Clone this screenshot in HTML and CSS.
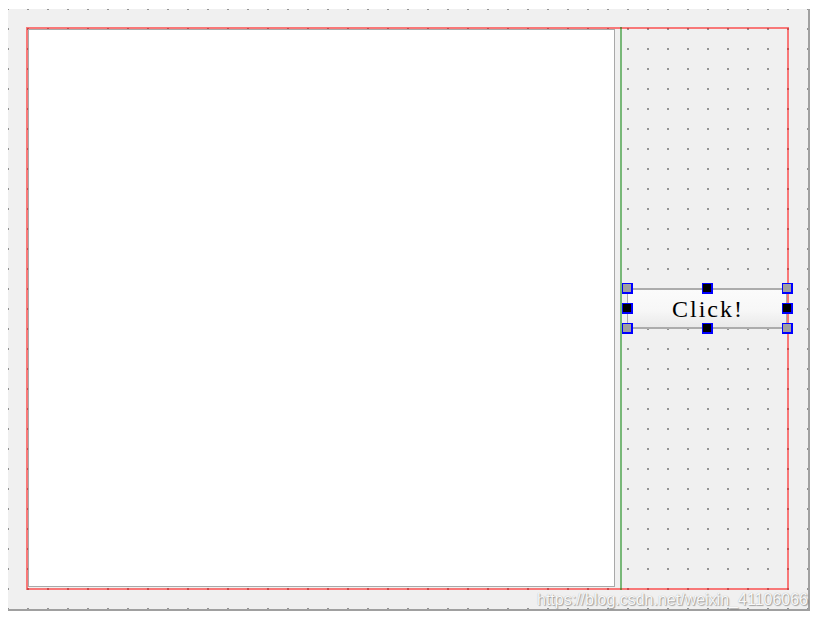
FILE: index.html
```html
<!DOCTYPE html>
<html lang="en">
<head>
<meta charset="utf-8">
<title>Form</title>
<link rel="stylesheet" href="styles.css">
</head>
<body>
<div class="form">
  <div class="layout">
    <div class="textedit"></div>
    <div class="splitter"></div>
    <div class="side">
      <div class="sel">
        <button class="btn" type="button"><span class="label">Click!</span></button>
        <span class="h c tl"></span>
        <span class="h tm"></span>
        <span class="h c tr"></span>
        <span class="h ml"></span>
        <span class="h mr"></span>
        <span class="h c bl"></span>
        <span class="h bm"></span>
        <span class="h c br"></span>
      </div>
    </div>
  </div>
</div>
<div class="wm">https://blog.csdn.net/weixin_41106066</div>
</body>
</html>
```
FILE: styles.css
```css
html, body {
  margin: 0;
  background: #ffffff;
}
body {
  padding: 9px 0 0 8px;
  font-family: "Liberation Sans", Arial, sans-serif;
  overflow: hidden;
}
.form {
  width: 763px;
  height: 563px;
  padding: 18px 19px 19px 18px;
  background-color: #f0f0f0;
  background-image: conic-gradient(from 270deg at 2px 2px, #949494 25%, transparent 0);
  background-size: 20px 20px;
  background-position: -1px -1px;
  border-right: 2px solid #a0a0a0;
  border-bottom: 2px solid #a0a0a0;
}
.layout {
  display: flex;
  width: 759px;
  height: 559px;
  border: 2px solid rgba(255, 0, 0, 0.5);
}
.textedit {
  flex: none;
  width: 585px;
  height: 556px;
  background: #ffffff;
  border: 1px solid #a9a9a9;
}
.splitter {
  flex: none;
  width: 2px;
  margin: -2px 0 -2px 5px;
  background: rgba(0, 128, 0, 0.5);
}
.side {
  flex: 1;
  display: flex;
  align-items: center;
}
.sel {
  position: relative;
  margin-left: 5px;
  width: 160px;
  height: 41px;
}
.btn {
  display: flex;
  align-items: center;
  justify-content: center;
  box-sizing: border-box;
  width: 100%;
  height: 100%;
  margin: 0;
  padding: 2px 0 0 2px;
  border: 2px solid #acacac;
  border-left-width: 1px;
  border-right-width: 1px;
  background: linear-gradient(to bottom, #fbfbfb 0%, #f7f7f7 55%, #e9e9e9 100%);
  color: #000000;
  font-family: "Liberation Serif", "Times New Roman", serif;
  font-size: 24px;
  letter-spacing: 2px;
}
.label {
  display: inline-block;
}
.h {
  position: absolute;
  width: 8px;
  height: 8px;
  border-style: solid;
  border-color: #0000ff;
  border-width: 1px 2px 2px 1px;
  background: #000000;
}
.h.c {
  background: #a0a0a0;
}
.tl { left: -5px; top: -5px; }
.tm { left: 75px; top: -5px; }
.tr { left: 155px; top: -5px; }
.ml { left: -5px; top: 15px; }
.mr { left: 155px; top: 15px; }
.bl { left: -5px; top: 35px; }
.bm { left: 75px; top: 35px; }
.br { left: 155px; top: 35px; }
.wm {
  position: absolute;
  left: 537px;
  top: 591px;
  font-size: 16px;
  line-height: 18px;
  color: rgba(255, 255, 255, 0.95);
  text-shadow: 1px 1px 1px rgba(0, 0, 0, 0.3), 0 0 1px rgba(0, 0, 0, 0.3);
  white-space: nowrap;
}
```
